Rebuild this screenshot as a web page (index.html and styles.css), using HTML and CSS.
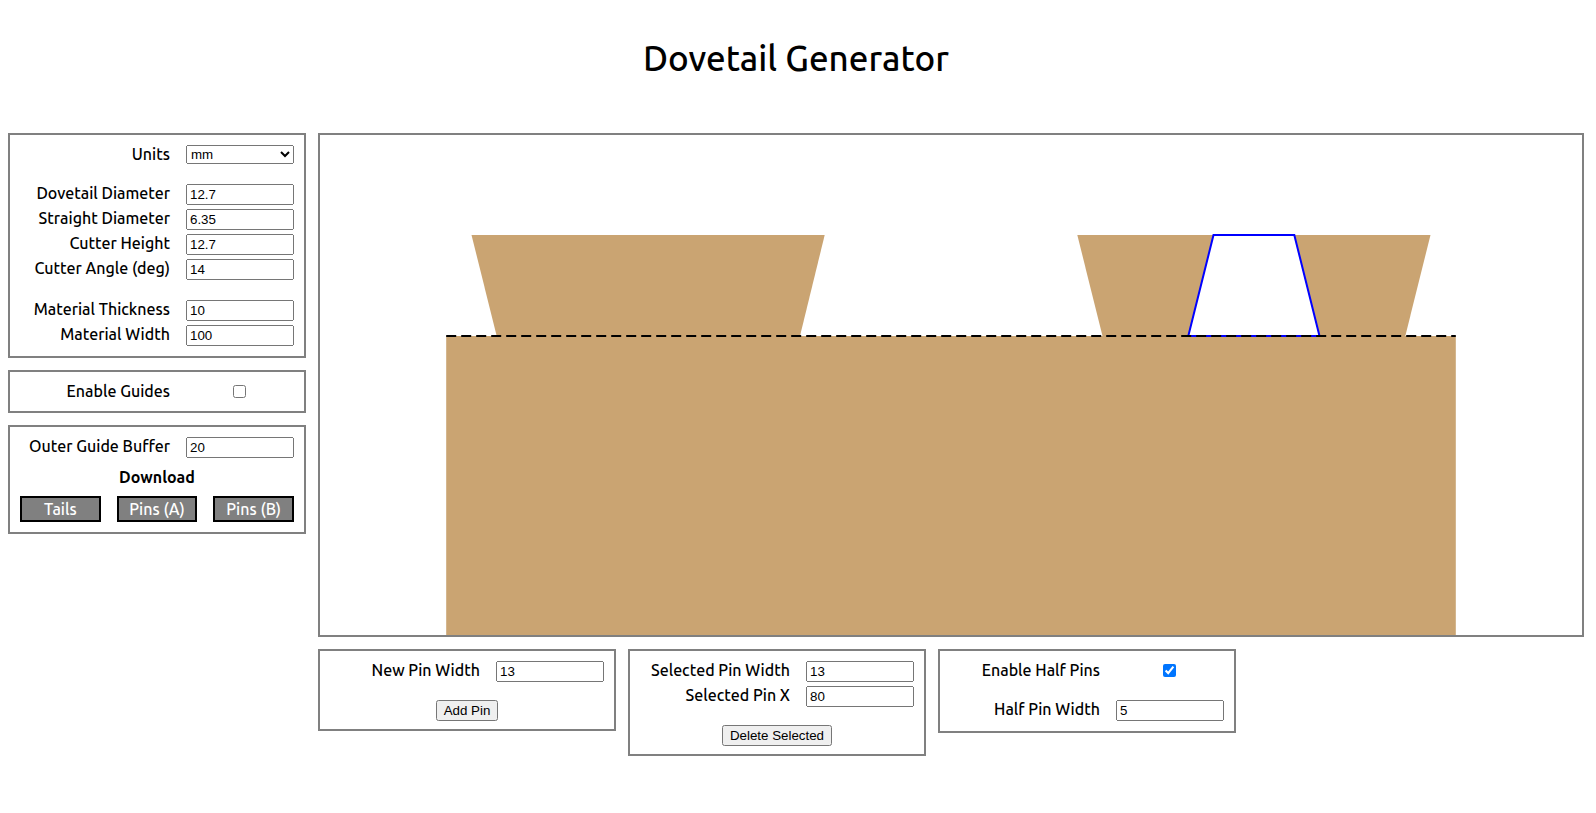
FILE: index.html
```html
<!DOCTYPE html>
<html lang="en">
<head>
<meta charset="utf-8">
<title>Dovetail Generator</title>
<link rel="stylesheet" href="styles.css">
</head>
<body>
<h1 class="title">Dovetail Generator</h1>
<div class="layout">
  <aside class="sidebar">
    <section class="panel">
      <div class="row"><label for="units">Units</label><select id="units"><option>mm</option><option>inches</option></select></div>
      <div class="row spaced"><label for="dovetail-diameter">Dovetail Diameter</label><input type="number" id="dovetail-diameter" value="12.7" step="any"></div>
      <div class="row"><label for="straight-diameter">Straight Diameter</label><input type="number" id="straight-diameter" value="6.35" step="any"></div>
      <div class="row"><label for="cutter-height">Cutter Height</label><input type="number" id="cutter-height" value="12.7" step="any"></div>
      <div class="row"><label for="cutter-angle">Cutter Angle (deg)</label><input type="number" id="cutter-angle" value="14"></div>
      <div class="row spaced"><label for="thickness">Material Thickness</label><input type="number" id="thickness" value="10"></div>
      <div class="row"><label for="width">Material Width</label><input type="number" id="width" value="100"></div>
    </section>
    <section class="panel">
      <div class="row check"><label for="guides">Enable Guides</label><input type="checkbox" id="guides"></div>
    </section>
    <section class="panel">
      <div class="row"><label for="buffer">Outer Guide Buffer</label><input type="number" id="buffer" value="20"></div>
      <h2 class="download-title">Download</h2>
      <div class="downloads">
        <button class="download" type="button">Tails</button>
        <button class="download" type="button">Pins (A)</button>
        <button class="download" type="button">Pins (B)</button>
      </div>
    </section>
  </aside>
  <main class="main">
    <div class="canvas">
      <svg class="drawing" viewBox="0 0 1262 500" role="img" aria-label="Dovetail layout">
        <g class="wood">
          <path d="M126.2 201H1135.8V500H126.2Z"/>
          <path d="M151.5 100H504.7L480 201H176.7Z"/>
          <path d="M757.3 100H1110.5L1085.3 201H782.5Z"/>
        </g>
        <path class="pin" d="M893.5 100H974.3L999.5 201H868.3Z"/>
        <path class="baseline" d="M126.2 201H1135.8"/>
      </svg>
    </div>
    <div class="pins">
      <section class="panel actions">
        <div class="row"><label for="new-width">New Pin Width</label><input type="number" id="new-width" value="13"></div>
        <button class="action" type="button">Add Pin</button>
      </section>
      <section class="panel actions">
        <div class="row"><label for="pin-width">Selected Pin Width</label><input type="number" id="pin-width" value="13"></div>
        <div class="row"><label for="pin-x">Selected Pin X</label><input type="number" id="pin-x" value="80"></div>
        <button class="action" type="button">Delete Selected</button>
      </section>
      <section class="panel">
        <div class="row check"><label for="half-pins">Enable Half Pins</label><input type="checkbox" id="half-pins" checked></div>
        <div class="row spaced"><label for="half-width">Half Pin Width</label><input type="number" id="half-width" value="5"></div>
      </section>
    </div>
  </main>
</div>
</body>
</html>
```
FILE: styles.css
```css
* { box-sizing: border-box; }
body {
  margin: 0;
  padding: 32px 12px 8px 8px;
  background: #fff;
  color: #000;
  font: 500 16px/18px Ubuntu, "Noto Sans", sans-serif;
}
.title {
  margin: 0 0 48px;
  font-size: 35px;
  line-height: 53px;
  font-weight: 500;
  text-align: center;
}
.layout { display: flex; align-items: flex-start; gap: 12px; }
.sidebar { flex: none; display: flex; flex-direction: column; gap: 12px; }
.main { flex: 1; min-width: 0; }
.panel {
  width: 298px;
  padding: 10px;
  border: 2px solid gray;
  display: flex;
  flex-direction: column;
  gap: 4px;
}
.row {
  display: grid;
  grid-template-columns: 1fr 108px;
  column-gap: 16px;
  align-items: start;
}
.row label { text-align: right; white-space: nowrap; }
.row input, .row select {
  width: 100%;
  margin: 0;
  font: 13.3333px/normal "Liberation Sans", Arial, sans-serif;
}
.row input[type="number"] { height: 21px; }
.row select { height: 19px; }
.row input[type="checkbox"] {
  width: 13px;
  height: 13px;
  margin-right: 1px;
  place-self: center;
}
.check { min-height: 19px; }
.spaced { margin-top: 16px; }
.download-title {
  margin: 6px 0;
  font-size: 16px;
  line-height: 18px;
  font-weight: 700;
  text-align: center;
}
.downloads { display: grid; grid-template-columns: repeat(3, 1fr); gap: 16px; }
.download {
  height: 26px;
  padding: 0;
  border: 2px solid #000;
  background: gray;
  color: #fff;
  font: inherit;
}
.canvas { border: 2px solid gray; }
.drawing { display: block; width: 100%; height: auto; }
.wood { fill: #caa472; }
.pin { fill: #fff; stroke: blue; stroke-width: 2; }
.baseline { fill: none; stroke: #000; stroke-width: 2; stroke-dasharray: 10 5; }
.pins { display: flex; flex-wrap: wrap; align-items: flex-start; gap: 12px; margin-top: 12px; }
.actions { padding-bottom: 8px; }
.action {
  align-self: center;
  height: 21px;
  margin: 14px 0 0;
  font: 13.3333px/normal "Liberation Sans", Arial, sans-serif;
}
```
